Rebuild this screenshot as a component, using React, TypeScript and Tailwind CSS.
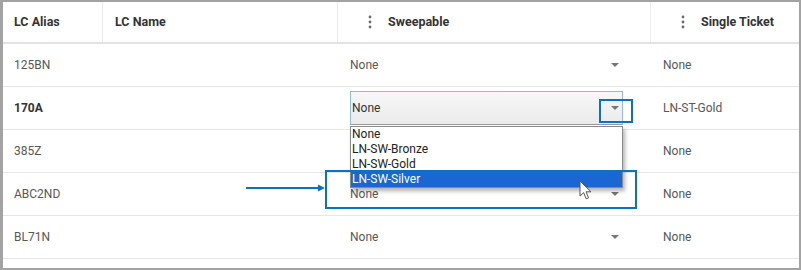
import React from "react";

const rows = [
  { alias: "125BN", sweep: "None", ticket: "None" },
  { alias: "170A", sweep: "None", ticket: "LN-ST-Gold", active: true },
  { alias: "385Z", sweep: "", ticket: "None" },
  { alias: "ABC2ND", sweep: "None", ticket: "None" },
  { alias: "BL71N", sweep: "None", ticket: "None" },
  { alias: "", sweep: "", ticket: "" },
];

const options = ["None", "LN-SW-Bronze", "LN-SW-Gold", "LN-SW-Silver"];

function Kebab() {
  return (
    <svg width="4" height="14" viewBox="0 0 4 14" className="shrink-0">
      <circle cx="2" cy="2" r="1.4" fill="#6b6b6b" />
      <circle cx="2" cy="7" r="1.4" fill="#6b6b6b" />
      <circle cx="2" cy="12" r="1.4" fill="#6b6b6b" />
    </svg>
  );
}

function Caret() {
  return (
    <svg width="8" height="4" viewBox="0 0 8 4">
      <path d="M0 0 L8 0 L4 4 Z" fill="#767676" />
    </svg>
  );
}

export default function App() {
  return (
    <div
      className="relative w-[801px] h-[270px] overflow-hidden bg-white border-t-2 border-b-2 border-r-2 border-l-[3px] border-[#a3a3a3]"
      style={{ fontFamily: "Roboto, 'Liberation Sans', sans-serif" }}
    >
      {/* Header */}
      <div className="grid grid-cols-[100px_235px_313px_146px] h-[42px] border-b-2 border-[#e2e2e2] text-[12.5px] font-bold text-[#333]">
        <div className="flex items-center pl-[11px] border-r border-[#ececec]">LC Alias</div>
        <div className="flex items-center pl-3 border-r border-[#ececec]">LC Name</div>
        <div className="flex items-center gap-4 pl-[30px] border-r border-[#ececec]">
          <Kebab />
          <span>Sweepable</span>
        </div>
        <div className="flex items-center gap-4 pl-[30px]">
          <Kebab />
          <span>Single Ticket</span>
        </div>
      </div>

      {/* Rows */}
      {rows.map((r, i) => (
        <div
          key={i}
          className="grid grid-cols-[100px_235px_313px_146px] h-[43px] border-b border-[#e6e6e6] text-[12px] text-[#575757]"
        >
          <div className={`flex items-center pl-[11px] ${r.active ? "font-bold text-[#333]" : ""}`}>
            {r.alias}
          </div>
          <div />
          <div className="flex items-center pl-3">
            {r.active ? (
              <div className="flex items-center justify-between w-[273px] h-[34px] pl-px border border-[#8fbbe6] border-b-[#9a9a9a] bg-gradient-to-b from-[#f7f7f7] to-[#ebebeb] text-[#333]">
                <span>{r.sweep}</span>
                <span className="w-[14px] flex justify-center">
                  <Caret />
                </span>
              </div>
            ) : r.alias && i !== 2 ? (
              <div className="flex items-center justify-between w-[273px]">
                <span>{r.sweep}</span>
                <span className="w-[16px] flex justify-center">
                  <Caret />
                </span>
              </div>
            ) : null}
          </div>
          <div className="flex items-center pl-3">{r.ticket}</div>
        </div>
      ))}

      {/* Open dropdown list */}
      <div className="absolute left-[347px] top-[124px] w-[273px] bg-white border border-[#8a8a8a] shadow-[2px_3px_4px_rgba(0,0,0,0.3)] text-[12px] text-[#222] leading-[15px]">
        {options.map((o) => (
          <div
            key={o}
            className={`h-[15px] pl-px ${o === "LN-SW-Silver" ? "bg-[#1a66d2] text-white" : ""}`}
          >
            {o}
          </div>
        ))}
      </div>

      {/* Annotation boxes */}
      <div className="absolute left-[596px] top-[97px] w-[34px] h-[24px] border-2 border-[#0a73bf]" />
      <div className="absolute left-[322px] top-[168px] w-[312px] h-[39px] border-2 border-[#0a73bf]" />

      {/* Arrow */}
      <svg className="absolute left-[243px] top-[181px]" width="80" height="10" viewBox="0 0 80 10">
        <line x1="0" y1="5" x2="74" y2="5" stroke="#0a73bf" strokeWidth="2" />
        <path d="M72 1.5 L79 5 L72 8.5 Z" fill="#0a73bf" />
      </svg>

      {/* Mouse pointer */}
      <svg className="absolute left-[576px] top-[178px]" width="14" height="21" viewBox="0 0 14 21">
        <path
          d="M1 1 L1 16 L4.6 12.6 L7.2 18.8 L9.6 17.8 L7 11.8 L12 11.8 Z"
          fill="#ffffff"
          stroke="#555"
          strokeWidth="1"
          strokeLinejoin="round"
        />
      </svg>
    </div>
  );
}
